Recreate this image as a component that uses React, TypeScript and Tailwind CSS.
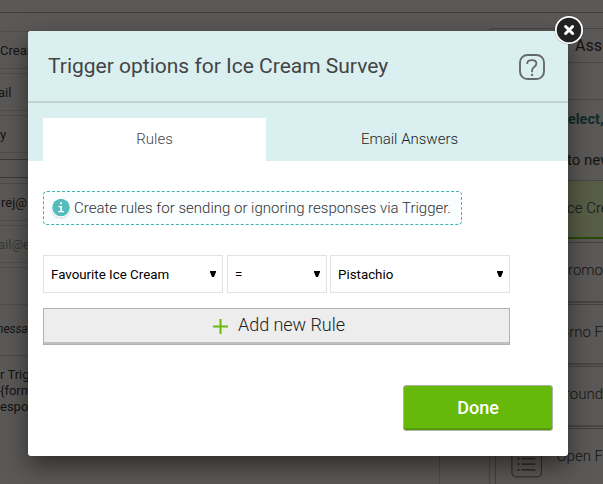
import { useState } from "react";
import clsx from "clsx";

const fields = [
  { label: "Cream", className: "mt-[18px]" },
  { label: "ail", className: "mt-1 -indent-[2px]" },
  { label: "y", className: "mt-1" },
];

const forms = ["Promo", "Brno F", "Around", "Open F"];

function ListIcon() {
  return (
    <svg className="mt-[7px]" width="36" height="36" viewBox="0 0 36 36" fill="none" stroke="#34312f" strokeWidth="1.5">
      <rect x="1" y="1" width="34" height="34" rx="5" />
      <path d="M7 14h3M12 14h16M7 20.5h3M12 20.5h16M7 27h3M12 27h16" strokeWidth="2" />
    </svg>
  );
}

function HelpIcon() {
  return (
    <svg width="26" height="26" viewBox="0 0 26 26" fill="none" stroke="#66696a">
      <rect x="1" y="1" width="24" height="24" rx="7.5" strokeWidth="1.9" />
      <path d="M8.3 10V9.2c0-2 1.8-3 4.6-3s4.5 1.1 4.5 3.4c0 3.5-4.3 3.3-4.3 6.6v2" strokeWidth="1.8" />
      <path d="M13.1 19.8v2.2" strokeWidth="2" />
    </svg>
  );
}

function InfoIcon() {
  return (
    <svg width="22" height="22" viewBox="0 0 22 22">
      <circle cx="11" cy="11.8" r="10" fill="#d5dddd" />
      <circle cx="11" cy="10.5" r="10" fill="#fff" />
      <circle cx="11" cy="10.5" r="8.7" fill="#55bbbd" />
      <path d="M10 5.2h2v2h-2zM8.5 9H12v5h2v1.3H8.2V14h2.2v-3.7H8.5z" fill="#fff" />
    </svg>
  );
}

function CloseButton() {
  return (
    <button className="absolute -top-[16px] -right-[16px]" aria-label="Close">
      <svg width="30" height="30" viewBox="0 0 30 30">
        <circle cx="15" cy="15" r="14.5" fill="#000" fillOpacity="0.3" />
        <circle cx="15" cy="15" r="13.2" fill="#222" stroke="#fff" strokeWidth="1.8" />
        <path d="M11.6 11.5l7 7M18.6 11.5l-7 7" stroke="#fff" strokeWidth="3" strokeLinecap="round" />
      </svg>
    </button>
  );
}

function RuleSelect({ value, className }: { value: string; className: string }) {
  return (
    <button
      className={clsx(
        "flex h-[38px] items-center justify-between border border-[#e2e2e2] bg-white pl-[7px] pr-[6px] text-[13.33px] text-black",
        className
      )}
    >
      <span className="whitespace-nowrap pt-px">{value}</span>
      <svg width="6" height="6" viewBox="0 0 6 6">
        <path d="M0 0h6v1L4 6H2L0 1z" fill="#000" />
      </svg>
    </button>
  );
}

function Background() {
  return (
    <div className="flex h-full flex-col whitespace-nowrap bg-[#5b5957] text-[#141312]">
      <div className="h-[13px] shrink-0 border-b border-[#3f3d3c]" />
      <div className="flex min-h-0 flex-1">
        <div className="w-[440px] shrink-0 text-[13px]">
          {fields.map((field) => (
            <div
              key={field.label}
              className={clsx("flex h-[38px] items-center border-y border-[#504e4c] pt-[2px]", field.className)}
            >
              {field.label}
            </div>
          ))}
          <div className="mt-[6px] h-[19px] border-y border-[#3b3937]" />
          <div className="mt-[5px] flex h-[38px] items-center border-y border-[#504e4c] pl-px pt-[2px]">rej@</div>
          <div className="mt-1 flex h-[38px] items-center border-y border-[#504e4c] pt-[2px] -indent-[2px] text-[#393735]">
            ail@e
          </div>
          <div className="mt-1 h-[38px] border-y border-[#504e4c]" />
          <div className="flex h-[51px] items-center border-b border-[#4b4947] pb-[3px] -indent-[3px] text-xs italic">
            nessage
          </div>
          <div className="h-[130px] border-r border-[#4d4b49] pt-[11px] leading-4">
            <p>r Trigger</p>
            <p>{"{form}"}</p>
            <p>esponse</p>
          </div>
        </div>
        <div className="ml-[49px] mt-[15px] flex flex-1 flex-col overflow-hidden rounded-tl border-l border-t border-[#474543]">
          <div className="flex h-[34px] shrink-0 items-center border-b border-[#4b4947] pl-[85px] text-base">
            Asse
          </div>
          <div className="h-[37px] shrink-0 border-b border-[#4b4947]" />
          <p className="flex h-[39px] shrink-0 items-center pl-[69px] pt-px text-[14.5px] font-bold text-[#122b2c]">
            Select,
          </p>
          <p className="flex h-[41px] shrink-0 items-center pl-[77px] pt-[2px] text-[15px]">to new</p>
          <div className="ml-[5px] flex h-[59px] shrink-0 items-center border-b-2 border-l border-t border-b-[#294b08] border-l-[#474543] border-t-[#474543] bg-[#585d47] pb-px pl-[67px] text-[15px] font-light">
            Ice Cre
          </div>
          <div className="mt-[3px] flex shrink-0 flex-col gap-px pl-[5px]">
            {forms.map((name) => (
              <div
                key={name}
                className="flex h-[61px] shrink-0 items-center border-b-2 border-l border-t border-b-[#484644] border-l-[#444240] border-t-[#444240] pl-[15px] text-[15px] font-light"
              >
                <ListIcon />
                <span className="ml-[14px] pb-[4px]">{name}</span>
              </div>
            ))}
          </div>
        </div>
      </div>
    </div>
  );
}

export default function App() {
  const [tab, setTab] = useState("Rules");

  return (
    <div className="relative h-[484px] w-[603px] overflow-hidden font-['Roboto',sans-serif]">
      <Background />
      <div className="absolute left-[28px] top-[31px] h-[425px] w-[540px] rounded-[3px] bg-white shadow-[0_10px_25px_rgba(0,0,0,0.5)]">
        <CloseButton />
        <header className="flex h-[72px] items-center justify-between rounded-t-[3px] border-b-2 border-[#c3d3d2] bg-[#daeff0] pl-[20px] pr-[23px]">
          <h1 className="whitespace-nowrap pt-[2px] text-[21px] text-[#444]">Trigger options for Ice Cream Survey</h1>
          <span className="mt-[2px]">
            <HelpIcon />
          </span>
        </header>
        <nav className="flex h-[58px] bg-[#daeff0] px-[15px] pt-[15px] text-[15px] font-light text-[#222]">
          <button
            className={clsx("w-[223px]", tab === "Rules" && "bg-white text-[#444]")}
            onClick={() => setTab("Rules")}
          >
            Rules
          </button>
          <button
            className={clsx("w-[287px]", tab === "Email Answers" && "bg-white text-[#444]")}
            onClick={() => setTab("Email Answers")}
          >
            Email Answers
          </button>
        </nav>
        <div className="px-[15px] pt-[30px]">
          <div className="flex h-[34px] w-[419px] items-center rounded border border-dashed border-[#42b3b5] bg-[#f9fdfe] pl-[6px]">
            <InfoIcon />
            <span className="ml-[2px] whitespace-nowrap text-[15px] font-light text-[#333]">
              Create rules for sending or ignoring responses via Trigger.
            </span>
          </div>
          <div className="mt-[30px] flex">
            <RuleSelect value="Favourite Ice Cream" className="w-[180px]" />
            <RuleSelect value="=" className="ml-1 w-[100px]" />
            <RuleSelect value="Pistachio" className="ml-[3px] w-[180px]" />
          </div>
          <button className="mt-[15px] flex h-[37px] w-[467px] items-center justify-center border border-[#b0b0b0] bg-[#ededed] pb-[4px] pl-[5px] text-[18px] font-light text-[#222] shadow-[inset_0_-2px_0_#c0c0c0]">
            <svg className="mt-[4px]" width="15" height="15" viewBox="0 0 15 15" stroke="#66bb0a" strokeWidth="2">
              <path d="M7.5 0v15M0 7.5h15" />
            </svg>
            <span className="ml-[10px] tracking-[-0.05px]">Add new Rule</span>
          </button>
          <div className="mt-[40px] flex justify-end">
            <button className="h-[46px] w-[150px] rounded-[3px] border border-[#aab3a4] bg-[#66b90b] pb-[2px] text-[18px] font-medium text-white shadow-[inset_0_-2px_0_#559a09]">
              Done
            </button>
          </div>
        </div>
      </div>
    </div>
  );
}
